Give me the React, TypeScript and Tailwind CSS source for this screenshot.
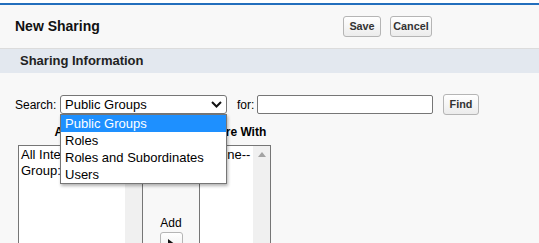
export default function App() {
  const btn =
    "flex items-center justify-center border border-[#b5b5b5] rounded-[3px] bg-gradient-to-b from-white to-[#ececec] text-[10.8px] font-bold text-[#333]";
  return (
    <div className="relative w-[539px] h-[243px] overflow-hidden bg-[#f8f8f8] font-['Liberation_Sans',Arial,sans-serif] text-black">
      <div className="h-[3px] bg-white" />
      <div className="h-[2px] bg-[#236fbd]" />
      {/* Header */}
      <div className="h-[44px] flex items-center border-b border-[#dcdcdc]">
        <div className="w-[343px] pl-[15px] text-[14px] font-bold text-[#111]">New Sharing</div>
        <button className={`${btn} w-[38px] h-[21px]`}>Save</button>
        <button className={`${btn} w-[42px] h-[21px] ml-[9px]`}>Cancel</button>
      </div>
      {/* Section bar */}
      <div className="h-[24px] bg-[#e3e8ef] pl-[20px] flex items-center text-[13px] font-bold text-[#222]">
        Sharing Information
      </div>
      {/* Search row */}
      <div className="mt-[21px] h-[21px] flex items-center text-[12px]">
        <span className="pl-[15px] w-[60px]">Search:</span>
        <div className="w-[167px] h-[19px] border border-[#767676] rounded-[3px] bg-white flex items-center justify-between pl-[4px] pr-[4px] text-[13px]">
          <span>Public Groups</span>
          <svg width="11" height="7" viewBox="0 0 11 7">
            <polyline points="1,1 5.5,5.5 10,1" fill="none" stroke="#111" strokeWidth="2" />
          </svg>
        </div>
        <span className="ml-[10px] w-[20px]">for:</span>
        <div className="w-[176px] h-[19px] border border-[#767676] rounded-[2px] bg-white" />
        <button className={`${btn} ml-[10px] w-[36px] h-[21px]`}>Find</button>
      </div>
      {/* Column headers */}
      <div className="mt-[10px] h-[14px] mb-[6px] flex ml-[18px] text-[12px] font-bold leading-[14px]">
        <div className="w-[125px] text-center">Available</div>
        <div className="w-[56px]" />
        <div className="w-[72px] text-center whitespace-nowrap">Share With</div>
      </div>
      {/* List boxes */}
      <div className="flex ml-[18px] h-[120px]">
        <div className="w-[125px] border border-[#767676] bg-white flex">
          <div className="flex-1 overflow-hidden pl-[2px] pt-[1px] text-[13px] leading-[16px] whitespace-nowrap">
            <div>All Internal Users</div>
            <div>Group: All Partner Users</div>
          </div>
          <div className="w-[17px] bg-[#f0f0f0]" />
        </div>
        <div className="w-[56px] flex flex-col items-center pt-[71px]">
          <div className="text-[12px] leading-[14px]">Add</div>
          <button className={`${btn} mt-[2px] w-[23px] h-[22px]`}>
            <svg width="6" height="9" viewBox="0 0 6 9">
              <polygon points="0,0 6,4.5 0,9" fill="#111" />
            </svg>
          </button>
        </div>
        <div className="w-[72px] border border-[#767676] bg-white flex">
          <div className="flex-1 overflow-hidden pl-[2px] pt-[1px] text-[13px] leading-[16px] whitespace-nowrap">
            --None--
          </div>
          <div className="w-[17px] bg-[#f0f0f0] flex justify-center pt-[6px]">
            <svg width="8" height="5" viewBox="0 0 8 5">
              <polygon points="0,5 4,0 8,5" fill="#a3a3a3" />
            </svg>
          </div>
        </div>
      </div>
      {/* Open dropdown */}
      <div className="absolute left-[60px] top-[114px] w-[167px] border border-[#767676] bg-white shadow-[1px_2px_3px_rgba(0,0,0,0.3)] text-[13px]">
        <div className="h-[17px] leading-[17px] pl-[4px] bg-[#1e90ff] text-white">Public Groups</div>
        <div className="h-[17px] leading-[17px] pl-[4px]">Roles</div>
        <div className="h-[17px] leading-[17px] pl-[4px]">Roles and Subordinates</div>
        <div className="h-[17px] leading-[17px] pl-[4px]">Users</div>
      </div>
    </div>
  );
}
